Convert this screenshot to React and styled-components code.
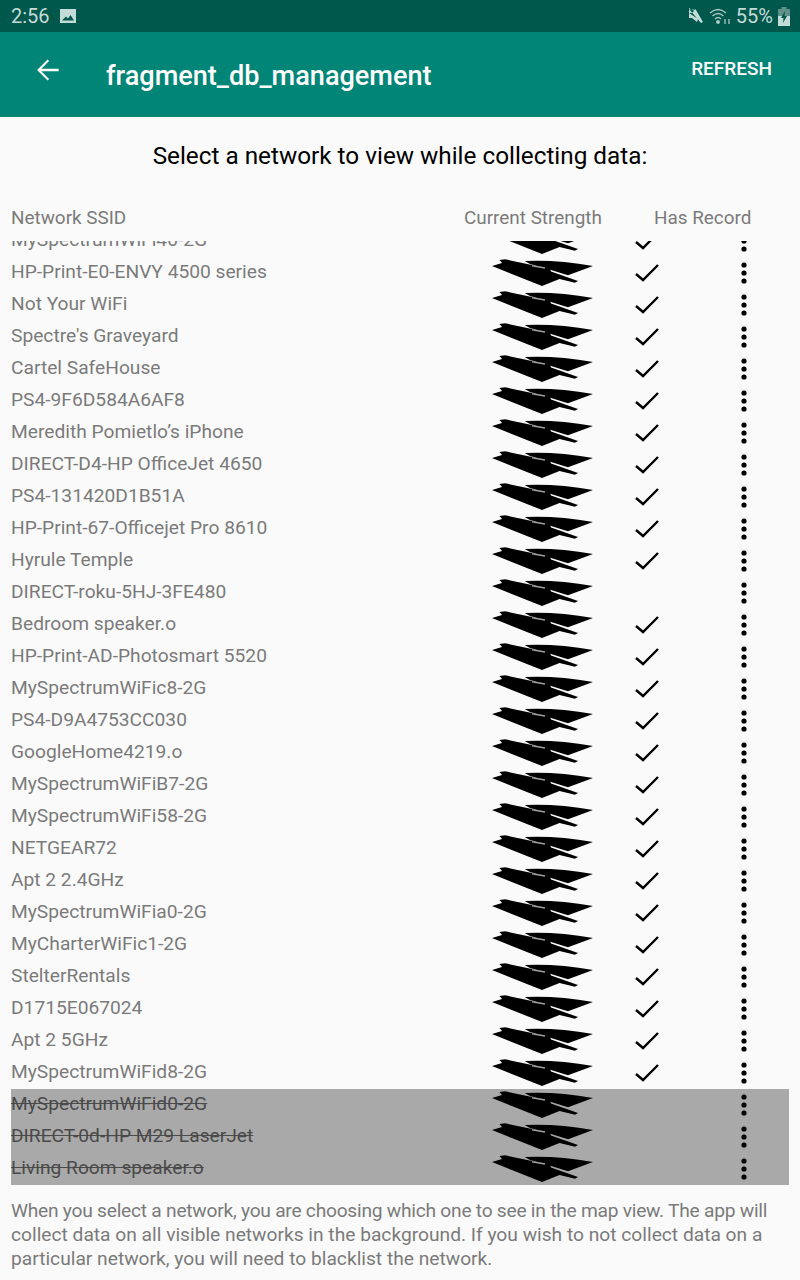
import styled, { createGlobalStyle } from 'styled-components';

const NETWORKS = [
  { ssid: 'MySpectrumWiFi40-2G', record: true },
  { ssid: 'HP-Print-E0-ENVY 4500 series', record: true },
  { ssid: 'Not Your WiFi', record: true },
  { ssid: "Spectre's Graveyard", record: true },
  { ssid: 'Cartel SafeHouse', record: true },
  { ssid: 'PS4-9F6D584A6AF8', record: true },
  { ssid: 'Meredith Pomietlo’s iPhone', record: true },
  { ssid: 'DIRECT-D4-HP OfficeJet 4650', record: true },
  { ssid: 'PS4-131420D1B51A', record: true },
  { ssid: 'HP-Print-67-Officejet Pro 8610', record: true },
  { ssid: 'Hyrule Temple', record: true },
  { ssid: 'DIRECT-roku-5HJ-3FE480', record: false },
  { ssid: 'Bedroom speaker.o', record: true },
  { ssid: 'HP-Print-AD-Photosmart 5520', record: true },
  { ssid: 'MySpectrumWiFic8-2G', record: true },
  { ssid: 'PS4-D9A4753CC030', record: true },
  { ssid: 'GoogleHome4219.o', record: true },
  { ssid: 'MySpectrumWiFiB7-2G', record: true },
  { ssid: 'MySpectrumWiFi58-2G', record: true },
  { ssid: 'NETGEAR72', record: true },
  { ssid: 'Apt 2 2.4GHz', record: true },
  { ssid: 'MySpectrumWiFia0-2G', record: true },
  { ssid: 'MyCharterWiFic1-2G', record: true },
  { ssid: 'StelterRentals', record: true },
  { ssid: 'D1715E067024', record: true },
  { ssid: 'Apt 2 5GHz', record: true },
  { ssid: 'MySpectrumWiFid8-2G', record: true },
  { ssid: 'MySpectrumWiFid0-2G', blacklisted: true },
  { ssid: 'DIRECT-0d-HP M29 LaserJet', blacklisted: true },
  { ssid: 'Living Room speaker.o', blacklisted: true },
];

const GlobalStyle = createGlobalStyle`
  html, body {
    margin: 0;
    padding: 0;
    background: #fafafa;
    font-family: Roboto, "Noto Sans", sans-serif;
  }
`;

// the wifi icon in the app is squashed by its ImageView, so it is drawn by hand
const SquashedWifi = () => (
  <StrengthIcon viewBox="0 0 102 32">
    <path d="M0 9 L10 6 L7.500 3 L13 2.300 L58 11.700 L59 14.500 L86 24 L83 25.700 L67.500 22 L50 29 Z" fill="#000" />
    <path d="M32.700 4 Q65 2.500 101 9 L76 18.300 L59 13 L38 7 Z" fill="#000" />
    <path d="M40 8.800 L53 11" stroke="#a0a0a0" strokeWidth="1.500" />
  </StrengthIcon>
);

const Check = () => (
  <CheckIcon viewBox="0 0 24 20">
    <path d="M1 11 L8 17 L23 2" fill="none" stroke="#000" strokeWidth="2.400" />
  </CheckIcon>
);

const Dots = () => (
  <DotsIcon viewBox="0 0 6 22">
    <circle cx="3" cy="3" r="2.600" />
    <circle cx="3" cy="11" r="2.600" />
    <circle cx="3" cy="19" r="2.600" />
  </DotsIcon>
);

const App = () => (
  <Page>
    <GlobalStyle />
    <StatusBar>
      <StatusGroup>
        <StatusText>2:56</StatusText>
        <PictureIcon viewBox="0 0 16 14">
          <path d="M0 0H16V14H0Z M2 11.500H14L10.500 6L8 9.500L6 7.500Z" fill="#c4dcd8" fillRule="evenodd" />
        </PictureIcon>
      </StatusGroup>
      <StatusGroup $gap={5}>
        <svg width="16" height="18" viewBox="0 0 16 18">
          <path d="M1 6H4L8 2V5L1 1M8 3L15 15L13 16L1 2Z M1 6V11H4L9 15L10 12Z" fill="#c4dcd8" />
        </svg>
        <svg width="22" height="18" viewBox="0 0 22 18" fill="none" stroke="#a8c8c2" strokeWidth="1.300">
          <path d="M1 6Q9 -1 17 6M3.500 9Q9 4 14.500 9M6 12Q9 9 12 12" />
          <circle cx="9" cy="15" r="1.300" fill="#c4dcd8" />
          <path d="M16 17V12M20 12V17" />
        </svg>
        <StatusText>55%</StatusText>
        <svg width="12" height="20" viewBox="0 0 12 20">
          <path d="M3.500 1H8.500V3H12V10H0V3H3.500Z" fill="#5f9189" />
          <path d="M0 10H12V20H0Z" fill="#c4dcd8" />
          <path d="M7 5L3 12H5.500L5 17L9 10H6.500Z" fill="#00574b" />
        </svg>
      </StatusGroup>
    </StatusBar>

    <Toolbar>
      <BackIcon viewBox="0 0 24 24">
        <path d="M20 11H7L12.800 5.200L11.700 4.100L3.800 12L11.700 19.900L12.800 18.800L7 13H20Z" fill="#fff" />
      </BackIcon>
      <ToolbarTitle>fragment_db_management</ToolbarTitle>
      <RefreshButton>REFRESH</RefreshButton>
    </Toolbar>

    <Content>
      <Heading>Select a network to view while collecting data:</Heading>
      <ColumnHeader>
        <HeaderCell>Network SSID</HeaderCell>
        <HeaderCell>Current Strength</HeaderCell>
        <HeaderCell>Has Record</HeaderCell>
      </ColumnHeader>
      <ListViewport>
        <List>
          {NETWORKS.map((network) => (
            <Row key={network.ssid} $blacklisted={network.blacklisted}>
              <Ssid $blacklisted={network.blacklisted}>{network.ssid}</Ssid>
              <SquashedWifi />
              <CheckCell>{network.record && <Check />}</CheckCell>
              <Dots />
            </Row>
          ))}
        </List>
      </ListViewport>
      <Footnote>
        <FootnoteLine $tight>
          When you select a network, you are choosing which one to see in the map view. The app will
        </FootnoteLine>
        <FootnoteLine>
          collect data on all visible networks in the background. If you wish to not collect data on a
        </FootnoteLine>
        <FootnoteLine>particular network, you will need to blacklist the network.</FootnoteLine>
      </Footnote>
    </Content>
  </Page>
);

const Page = styled.div`
  width: 800px;
  height: 1280px;
  overflow: hidden;
  display: flex;
  flex-direction: column;
  background: #fafafa;
`;

const StatusBar = styled.div`
  height: 32px;
  flex: none;
  display: flex;
  align-items: center;
  justify-content: space-between;
  padding: 0 10px 0 11px;
  background: #00574b;
`;

const StatusGroup = styled.div`
  display: flex;
  align-items: center;
  gap: ${(props) => props.$gap || 10}px;
`;

const StatusText = styled.span`
  font-size: 20px;
  color: #c4dcd8;
`;

const PictureIcon = styled.svg`
  width: 16px;
  height: 14px;
`;

const Toolbar = styled.div`
  height: 85px;
  flex: none;
  display: flex;
  align-items: flex-start;
  background: #008577;
`;

const BackIcon = styled.svg`
  width: 32px;
  height: 32px;
  flex: none;
  margin: 22px 0 0 32px;
`;

const ToolbarTitle = styled.div`
  margin: 26px 0 0 42px;
  font-size: 27.1px;
  line-height: 36px;
  font-weight: 500;
  color: #fff;
`;

const RefreshButton = styled.div`
  margin: 26px 28px 0 auto;
  font-size: 19px;
  line-height: 22px;
  font-weight: 500;
  color: #fff;
`;

const Content = styled.div`
  flex: 1;
  display: flex;
  flex-direction: column;
`;

const Heading = styled.div`
  margin-top: 24px;
  text-align: center;
  font-size: 24.3px;
  line-height: 30px;
  color: #000;
`;

const ColumnHeader = styled.div`
  display: grid;
  grid-template-columns: 453px 190px auto;
  margin-top: 35px;
  padding: 0 11px;
`;

const HeaderCell = styled.div`
  font-size: 18.9px;
  line-height: 24px;
  color: #7a7a7a;
`;

const ListViewport = styled.div`
  height: 944px;
  margin-top: 11px;
  overflow: hidden;
`;

const List = styled.div`
  margin-top: -16px;
  display: flex;
  flex-direction: column;
`;

const Row = styled.div`
  height: 32px;
  margin: 0 11px;
  display: grid;
  grid-template-columns: 481px 102px 40px 1fr;
  align-items: center;
  background: ${(props) => (props.$blacklisted ? '#a9a9a9' : 'transparent')};
`;

const Ssid = styled.div`
  font-size: 19.2px;
  line-height: 28px;
  margin-bottom: 2px;
  white-space: nowrap;
  color: ${(props) => (props.$blacklisted ? '#4a4a4a' : '#7a7a7a')};
  text-decoration: ${(props) => (props.$blacklisted ? 'line-through' : 'none')};
`;

const StrengthIcon = styled.svg`
  display: block;
  width: 102px;
  height: 32px;
`;

const CheckCell = styled.div`
  height: 20px;
  padding-left: 41px;
`;

const CheckIcon = styled.svg`
  display: block;
  width: 24px;
  height: 20px;
`;

const DotsIcon = styled.svg`
  display: block;
  width: 6px;
  height: 22px;
  margin-left: 107px;
  fill: #000;
`;

const Footnote = styled.div`
  margin-top: 14px;
  padding: 0 11px;
  font-size: 19.2px;
  line-height: 24px;
  color: #7a7a7a;
`;

const FootnoteLine = styled.div`
  white-space: nowrap;
  letter-spacing: ${(props) => (props.$tight ? '-0.25px' : '0')};
`;

export default App;
